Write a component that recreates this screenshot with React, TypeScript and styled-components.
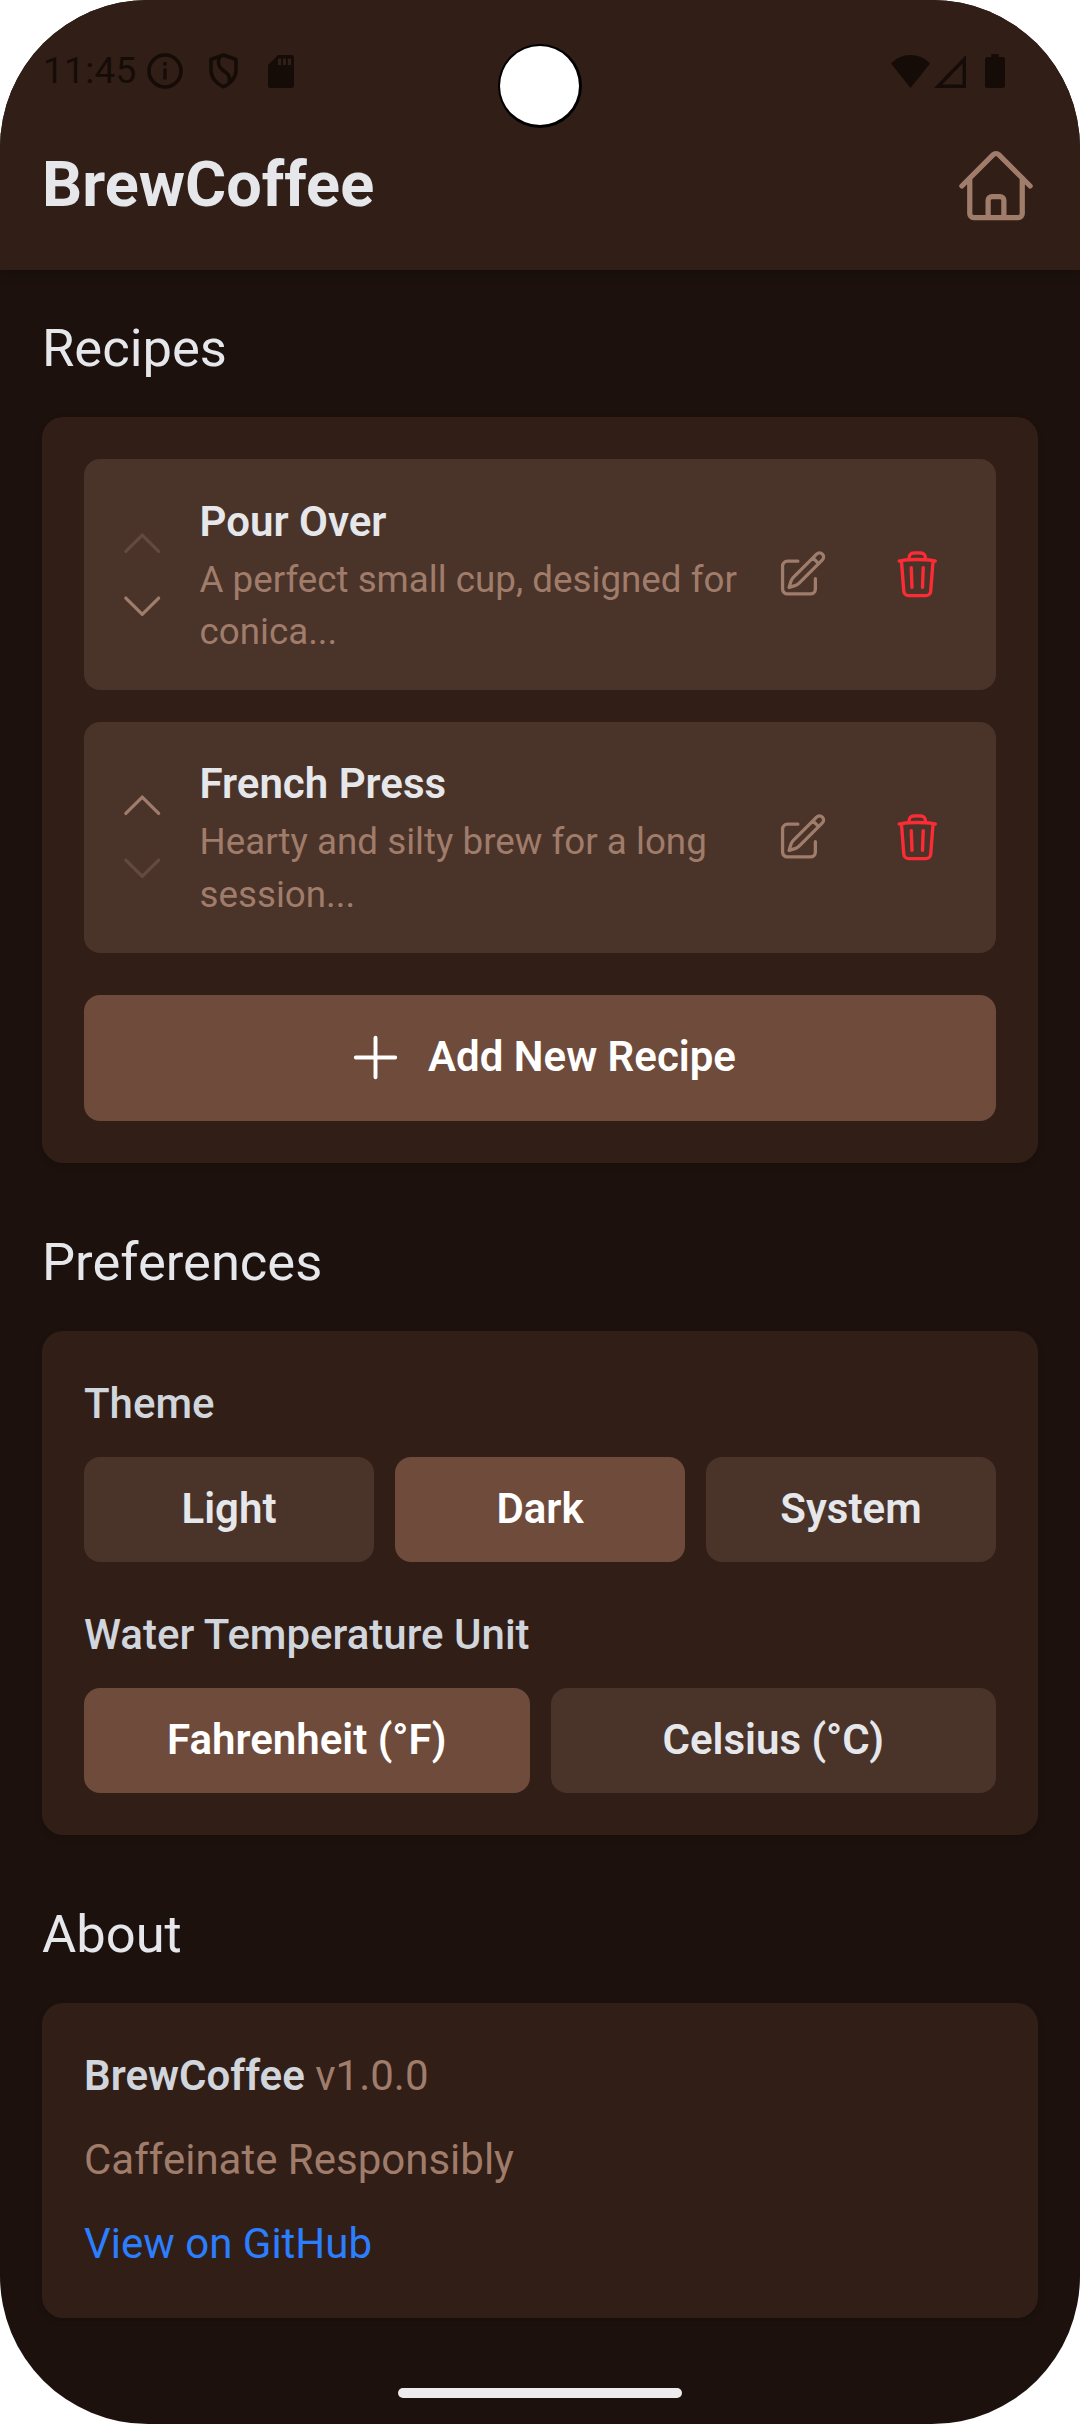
import React from "react";
import styled, { createGlobalStyle } from "styled-components";
import {
  HiOutlineHome,
  HiOutlineChevronUp,
  HiOutlineChevronDown,
  HiOutlinePencilSquare,
  HiOutlineTrash,
  HiOutlinePlus,
} from "react-icons/hi2";

const color = {
  page: "#1c110d",
  surface: "#311e17",
  raised: "#4a3329",
  accent: "#6f4b3c",
  muted: "#a07c6b",
  text: "#e5e7eb",
  label: "#d1d5dc",
  danger: "#fb2c36",
  link: "#2b7fff",
  system: "#150c08",
};

const GlobalStyle = createGlobalStyle`
  * { box-sizing: border-box; }
  html, body { margin: 0; padding: 0; background: #ffffff; }
  button { font: inherit; color: inherit; border: 0; background: none; padding: 0; margin: 0; }
`;

const Screen = styled.div`
  position: relative;
  display: flex;
  flex-direction: column;
  width: 1080px;
  height: 2424px;
  overflow: hidden;
  border-radius: 148px;
  background: ${color.page};
  color: ${color.text};
  font-family: Roboto, "Noto Sans", sans-serif;
  font-size: 42px;
  line-height: 61px;
`;

const Header = styled.header`
  flex: none;
  height: 270px;
  background: ${color.surface};
  box-shadow: 0 4px 10px rgba(0, 0, 0, 0.2);
`;

const StatusBar = styled.div`
  display: flex;
  align-items: center;
  justify-content: space-between;
  height: 144px;
  padding: 0 75px 2px 43px;
  color: ${color.system};
`;

const StatusGroup = styled.div`
  display: flex;
  align-items: center;
`;

const Clock = styled.span`
  font-size: 37px;
  line-height: 44px;
  letter-spacing: 0.3px;
  width: 104px;
`;

const Glyph = styled.svg<{ $gap?: number }>`
  display: block;
  flex: none;
  margin-left: ${(p) => p.$gap ?? 0}px;
`;

const Camera = styled.div`
  position: absolute;
  top: 44px;
  left: 498px;
  width: 84px;
  height: 84px;
  border: 2px solid #000000;
  border-bottom-width: 3px;
  border-right-width: 3px;
  border-radius: 50%;
  background: #ffffff;
`;

const TitleRow = styled.div`
  display: flex;
  align-items: center;
  justify-content: space-between;
  height: 84px;
  padding: 0 42px;
`;

const AppTitle = styled.h1`
  margin: 0 0 3px;
  font-size: 63px;
  line-height: 84px;
  font-weight: 700;
`;

const IconButton = styled.button<{
  $size: number;
  $pad?: number;
  $tone?: string;
  $dim?: boolean;
  $weight?: number;
}>`
  display: flex;
  flex: none;
  padding: ${(p) => p.$pad ?? 0}px;
  color: ${(p) => p.$tone ?? color.muted};
  opacity: ${(p) => (p.$dim ? 0.3 : 1)};

  svg {
    display: block;
    width: ${(p) => p.$size}px;
    height: ${(p) => p.$size}px;
    stroke-width: ${(p) => p.$weight ?? 1.5};
  }
`;

const Main = styled.main`
  display: flex;
  flex-direction: column;
  gap: 63px;
  padding: 42px 42px 0;
`;

const Section = styled.section`
  display: flex;
  flex-direction: column;
  gap: 31.5px;
`;

const SectionTitle = styled.h2`
  margin: 0;
  font-size: 52.5px;
  line-height: 73.5px;
  font-weight: 400;
`;

const Card = styled.div<{ $gap: number }>`
  display: flex;
  flex-direction: column;
  gap: ${(p) => p.$gap}px;
  padding: 42px;
  border-radius: 21px;
  background: ${color.surface};
  box-shadow: 0 3px 6px rgba(0, 0, 0, 0.14);
`;

const RecipeList = styled.div`
  display: flex;
  flex-direction: column;
  gap: 31.5px;
  padding-bottom: 0.5px;
`;

const RecipeItem = styled.div`
  display: flex;
  align-items: center;
  height: 231px;
  padding: 0 31.5px;
  border-radius: 16px;
  background: ${color.raised};
`;

const Reorder = styled.div`
  display: flex;
  flex-direction: column;
  gap: 10.5px;
  margin-right: 31.5px;
`;

const RecipeText = styled.div`
  flex: 1;
  min-width: 0;
`;

const RecipeName = styled.div`
  padding-bottom: 2px;
  font-weight: 600;
`;

const RecipeNote = styled.div`
  font-size: 36.75px;
  line-height: 52.5px;
  color: ${color.muted};
`;

const Actions = styled.div`
  display: flex;
  gap: 21px;
`;

const AddButton = styled.button`
  display: flex;
  align-items: center;
  justify-content: center;
  gap: 21px;
  height: 126px;
  padding-bottom: 1px;
  border-radius: 16px;
  background: ${color.accent};
  color: #ffffff;
  font-weight: 600;

  svg {
    width: 63px;
    height: 63px;
  }
`;

const AddLabel = styled.span`
  padding-bottom: 3px;
`;

const Setting = styled.div`
  display: flex;
  flex-direction: column;
  gap: 21px;
`;

const SettingLabel = styled.div`
  padding-bottom: 2px;
  font-weight: 500;
  color: ${color.label};
`;

const Options = styled.div`
  display: flex;
  gap: 21px;
`;

const Option = styled.button<{ $active?: boolean }>`
  flex: 1 1 0;
  height: 105px;
  padding-bottom: 2px;
  border-radius: 16px;
  font-weight: 600;
  background: ${(p) => (p.$active ? color.accent : color.raised)};
  color: ${(p) => (p.$active ? "#ffffff" : color.text)};
`;

const AboutLine = styled.div`
  padding-bottom: 2px;
  color: ${color.muted};

  strong {
    font-weight: 600;
    color: ${color.label};
  }
`;

const AboutLink = styled.a`
  padding-bottom: 2px;
  color: ${color.link};
`;

const HomeIndicator = styled.div`
  position: absolute;
  left: 398px;
  bottom: 26px;
  width: 284px;
  height: 10px;
  border-radius: 5px;
  background: #ececec;
`;

const recipes = [
  { name: "Pour Over", note: "A perfect small cup, designed for conica..." },
  { name: "French Press", note: "Hearty and silty brew for a long session..." },
];

function SystemStatus() {
  return (
    <StatusBar>
      <StatusGroup>
        <Clock>11:45</Clock>
        <Glyph width="36" height="36" viewBox="0 0 36 36" fill="none">
          <circle cx="18" cy="18" r="16" stroke="currentColor" strokeWidth="3.6" />
          <path d="M16.3 15.5h3.4v11h-3.4zM16.3 9h3.4v3.4h-3.4z" fill="currentColor" />
        </Glyph>
        <Glyph $gap={26} width="29" height="36" viewBox="0 0 29 36" fill="none">
          <path
            d="M14.5 2 27 6.5V17C27 25 21 31 14.5 33.8 8 31 2 25 2 17V6.5Z"
            stroke="currentColor"
            strokeWidth="3.6"
            strokeLinejoin="round"
          />
          <path
            d="M10.5 4C8.5 9 9.5 13.5 13 16.5 17.5 20 21.5 21.5 20.5 29"
            stroke="currentColor"
            strokeWidth="3.6"
          />
        </Glyph>
        <Glyph $gap={30} width="26" height="33" viewBox="0 0 26 33">
          <path
            fillRule="evenodd"
            fill="currentColor"
            d="M10 0H23.5Q26 0 26 2.5V30.5Q26 33 23.5 33H2.5Q0 33 0 30.5V10ZM10 3.5V10H13.2V3.5ZM15 3.5V10H18V3.5ZM19.8 3.5V10H23V3.5Z"
          />
        </Glyph>
      </StatusGroup>
      <StatusGroup>
        <Glyph width="39" height="33" viewBox="0 0 39 33">
          <path d="M0 8.5C11-2.7 28-2.7 39 8.5L19.5 33Z" fill="currentColor" />
        </Glyph>
        <Glyph $gap={4} width="32" height="33" viewBox="0 0 32 33">
          <path
            fillRule="evenodd"
            d="M0 33 32 0V33ZM8.2 29.5H28.5V8.4Z"
            fill="currentColor"
          />
        </Glyph>
        <Glyph $gap={19} width="20" height="34" viewBox="0 0 20 34">
          <path
            d="M6.3 0H13.7V3H17.5Q20 3 20 5.5V31.5Q20 34 17.5 34H2.5Q0 34 0 31.5V5.5Q0 3 2.5 3H6.3Z"
            fill="currentColor"
          />
        </Glyph>
      </StatusGroup>
    </StatusBar>
  );
}

export default function App() {
  return (
    <>
      <GlobalStyle />
      <Screen>
        <Header>
          <SystemStatus />
          <TitleRow>
            <AppTitle>BrewCoffee</AppTitle>
            <IconButton $size={84} aria-label="Home">
              <HiOutlineHome />
            </IconButton>
          </TitleRow>
        </Header>

        <Main>
          <Section>
            <SectionTitle>Recipes</SectionTitle>
            <Card $gap={42}>
              <RecipeList>
                {recipes.map((recipe, index) => (
                  <RecipeItem key={recipe.name}>
                    <Reorder>
                      <IconButton $size={52.5} $dim={index === 0} aria-label="Move up">
                        <HiOutlineChevronUp />
                      </IconButton>
                      <IconButton
                        $size={52.5}
                        $dim={index === recipes.length - 1}
                        aria-label="Move down"
                      >
                        <HiOutlineChevronDown />
                      </IconButton>
                    </Reorder>
                    <RecipeText>
                      <RecipeName>{recipe.name}</RecipeName>
                      <RecipeNote>{recipe.note}</RecipeNote>
                    </RecipeText>
                    <Actions>
                      <IconButton $size={52.5} $pad={21} aria-label="Edit">
                        <HiOutlinePencilSquare />
                      </IconButton>
                      <IconButton
                        $size={52.5}
                        $pad={21}
                        $weight={1.55}
                        $tone={color.danger}
                        aria-label="Delete"
                      >
                        <HiOutlineTrash />
                      </IconButton>
                    </Actions>
                  </RecipeItem>
                ))}
              </RecipeList>
              <AddButton>
                <HiOutlinePlus />
                <AddLabel>Add New Recipe</AddLabel>
              </AddButton>
            </Card>
          </Section>

          <Section>
            <SectionTitle>Preferences</SectionTitle>
            <Card $gap={42}>
              <Setting>
                <SettingLabel>Theme</SettingLabel>
                <Options>
                  <Option>Light</Option>
                  <Option $active>Dark</Option>
                  <Option>System</Option>
                </Options>
              </Setting>
              <Setting>
                <SettingLabel>Water Temperature Unit</SettingLabel>
                <Options>
                  <Option $active>Fahrenheit (°F)</Option>
                  <Option>Celsius (°C)</Option>
                </Options>
              </Setting>
            </Card>
          </Section>

          <Section>
            <SectionTitle>About</SectionTitle>
            <Card $gap={21}>
              <AboutLine>
                <strong>BrewCoffee</strong> v1.0.0
              </AboutLine>
              <AboutLine>Caffeinate Responsibly</AboutLine>
              <AboutLink>View on GitHub</AboutLink>
            </Card>
          </Section>
        </Main>

        <Camera />
        <HomeIndicator />
      </Screen>
    </>
  );
}
